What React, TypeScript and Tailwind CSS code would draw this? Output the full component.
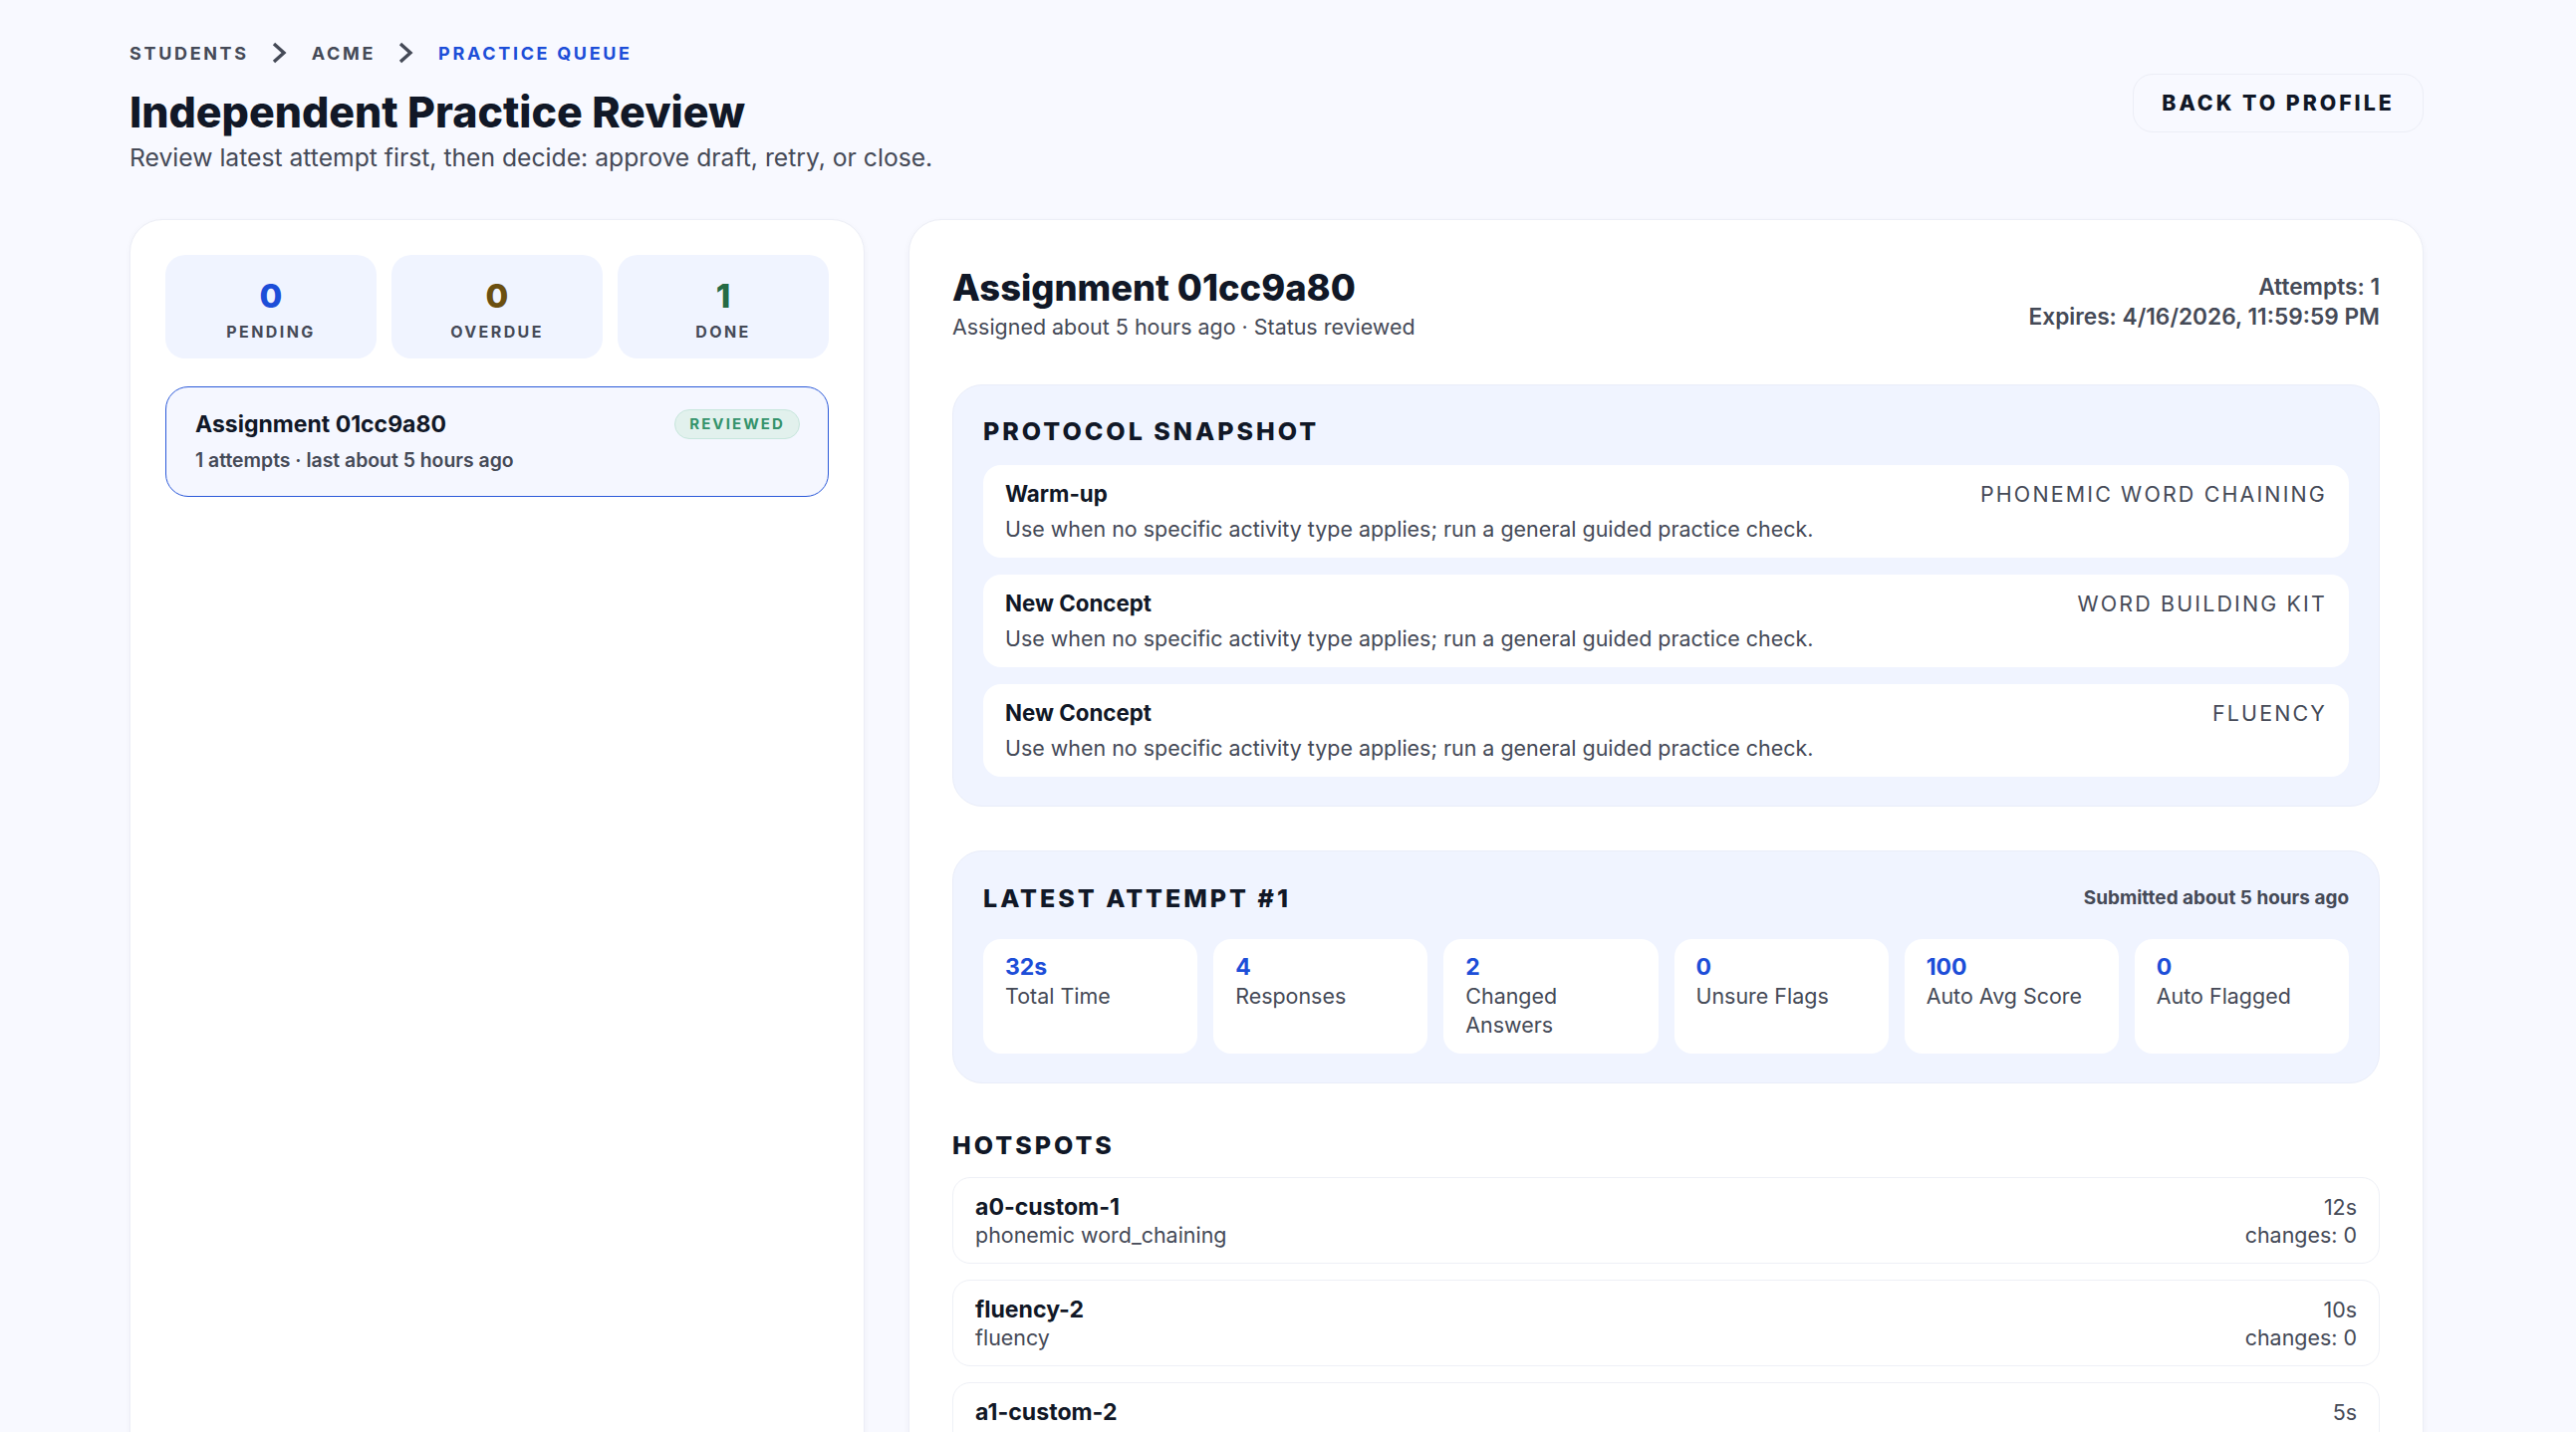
const protocol = [
  { title: "Warm-up", tag: "PHONEMIC WORD CHAINING" },
  { title: "New Concept", tag: "WORD BUILDING KIT" },
  { title: "New Concept", tag: "FLUENCY" },
];

const metrics = [
  { value: "32s", label: "Total Time" },
  { value: "4", label: "Responses" },
  { value: "2", label: "Changed Answers" },
  { value: "0", label: "Unsure Flags" },
  { value: "100", label: "Auto Avg Score" },
  { value: "0", label: "Auto Flagged" },
];

const hotspots = [
  { id: "a0-custom-1", kind: "phonemic word_chaining", time: "12s", changes: "changes: 0" },
  { id: "fluency-2", kind: "fluency", time: "10s", changes: "changes: 0" },
  { id: "a1-custom-2", time: "5s" },
];

const Chevron = () => (
  <svg width="15" height="22" viewBox="0 0 15 22" fill="none" className="mr-[25px] ml-[23px] shrink-0">
    <path d="M2 2l10 9-10 9" stroke="#454a57" strokeWidth="3.4" />
  </svg>
);

const Stat = ({ value, label, color }: { value: string; label: string; color: string }) => (
  <div className="flex h-[104px] flex-col items-center rounded-[20px] bg-[#f0f4ff] pt-[21px]">
    <span className={`text-[33px] leading-[40px] font-extrabold ${color}`}>{value}</span>
    <span className="mt-[5px] text-[16px] leading-[22px] font-bold tracking-[0.15em] text-[#454a57]">{label}</span>
  </div>
);

export default function App() {
  return (
    <div
      className="h-screen overflow-hidden bg-[#f8f9ff] pt-[41px] pr-[153px] pl-[130px]"
      style={{ fontFamily: "Inter, 'Noto Sans', sans-serif" }}
    >
      <div className="flex items-start justify-between">
        <div>
          <div className="flex h-[24px] items-center text-[18px] font-bold tracking-[0.148em] text-[#454a57]">
            <span>STUDENTS</span>
            <Chevron />
            <span>ACME</span>
            <Chevron />
            <span className="text-[#1d4ed8]">PRACTICE QUEUE</span>
          </div>
          <h1 className="mt-[20px] text-[42.9px] leading-[54px] font-extrabold text-[#111827]">
            Independent Practice Review
          </h1>
          <p className="mt-[2px] text-[24.7px] leading-[34px] text-[#454a57]">
            Review latest attempt first, then decide: approve draft, retry, or close.
          </p>
        </div>
        <button className="mt-[33px] h-[59px] w-[292px] rounded-[20px] border border-[#eceef6] text-center text-[21.3px] font-extrabold tracking-[0.14em] text-[#111827]">
          BACK TO PROFILE
        </button>
      </div>

      <div className="mt-[45px] flex items-start gap-[44px]">
        <aside className="h-[1300px] w-[738px] shrink-0 rounded-[33px] border border-[#eceef6] bg-white px-[35px] pt-[35px] shadow-[0_2px_6px_rgba(30,40,80,0.04)]">
          <div className="grid grid-cols-3 gap-[15px]">
            <Stat value="0" label="PENDING" color="text-[#1d4ed8]" />
            <Stat value="0" label="OVERDUE" color="text-[#6b4f10]" />
            <Stat value="1" label="DONE" color="text-[#256a45]" />
          </div>
          <div className="mt-[28px] h-[111px] rounded-[23px] border-[1.5px] border-[#2c5ad9] bg-[#f5f7ff] pt-[22px] pr-[28px] pl-[29px]">
            <div className="flex items-start justify-between">
              <span className="text-[23px] leading-[30px] font-bold text-[#111827]">Assignment 01cc9a80</span>
              <span className="rounded-full border-[1.5px] border-[#c7e6dc] bg-[#e2f1ed] px-[14px] text-[15px] leading-[28px] font-bold tracking-[0.14em] text-[#34936b]">
                REVIEWED
              </span>
            </div>
            <p className="mt-[8px] text-[19.4px] leading-[26px] font-semibold text-[#454a57]">
              1 attempts · last about 5 hours ago
            </p>
          </div>
        </aside>

        <main className="h-[1300px] min-w-0 flex-1 rounded-[33px] border border-[#eceef6] bg-white px-[43px] pt-[45px] shadow-[0_2px_6px_rgba(30,40,80,0.04)]">
          <div className="flex items-start justify-between">
            <div>
              <h2 className="text-[36.3px] leading-[46px] font-extrabold text-[#111827]">Assignment 01cc9a80</h2>
              <p className="mt-[1px] text-[21.44px] leading-[30px] text-[#454a57]">Assigned about 5 hours ago · Status reviewed</p>
            </div>
            <div className="mt-[7px] text-right text-[22.7px] leading-[30px] font-semibold text-[#454a57]">
              <p>Attempts: 1</p>
              <p>Expires: 4/16/2026, 11:59:59 PM</p>
            </div>
          </div>

          <section className="mt-[43px] h-[424px] rounded-[30px] border border-[#e9edf9] bg-[#f0f4ff] px-[30px] pt-[29px]">
            <h3 className="text-[25px] leading-[34px] font-extrabold tracking-[0.12em] text-[#111827]">PROTOCOL SNAPSHOT</h3>
            <div className="mt-[17px] flex flex-col gap-[17px]">
              {protocol.map((row, i) => (
                <div key={i} className="h-[93px] rounded-[18px] bg-white px-[22px] pt-[14px]">
                  <div className="flex items-center justify-between">
                    <span className="text-[22.3px] leading-[30px] font-bold text-[#111827]">{row.title}</span>
                    <span className="text-[21.44px] leading-[30px] tracking-[0.1em] text-[#454a57]">{row.tag}</span>
                  </div>
                  <p className="mt-[5px] text-[21.44px] leading-[30px] text-[#454a57]">
                    Use when no specific activity type applies; run a general guided practice check.
                  </p>
                </div>
              ))}
            </div>
          </section>

          <section className="mt-[44px] h-[234px] rounded-[30px] border border-[#e9edf9] bg-[#f0f4ff] px-[30px] pt-[30px]">
            <div className="flex items-center justify-between">
              <h3 className="text-[25px] leading-[34px] font-extrabold tracking-[0.12em] text-[#111827]">LATEST ATTEMPT #1</h3>
              <span className="text-[18.96px] leading-[26px] font-bold text-[#454a57]">Submitted about 5 hours ago</span>
            </div>
            <div className="mt-[24px] grid grid-cols-6 gap-[16px]">
              {metrics.map((m) => (
                <div key={m.label} className="h-[115px] rounded-[18px] bg-white px-[22px] pt-[14px]">
                  <div className="text-[23px] leading-[29px] font-bold text-[#1d4ed8]">{m.value}</div>
                  <div className="text-[21.44px] leading-[29px] text-[#454a57]">{m.label}</div>
                </div>
              ))}
            </div>
          </section>

          <h3 className="mt-[45px] text-[25px] leading-[34px] font-extrabold tracking-[0.12em] text-[#111827]">HOTSPOTS</h3>
          <div className="mt-[15px] flex flex-col gap-[16px]">
            {hotspots.map((h) => (
              <div key={h.id} className="flex h-[87px] items-start justify-between rounded-[18px] border border-[#eef0f6] bg-white px-[22px] pt-[15px]">
                <div>
                  <div className="text-[23.1px] leading-[28px] font-bold text-[#111827]">{h.id}</div>
                  {h.kind && <div className="text-[21.44px] leading-[28px] text-[#454a57]">{h.kind}</div>}
                </div>
                <div className="text-right text-[21.44px] leading-[28px] text-[#454a57]">
                  <div>{h.time}</div>
                  {h.changes && <div>{h.changes}</div>}
                </div>
              </div>
            ))}
          </div>
        </main>
      </div>
    </div>
  );
}
